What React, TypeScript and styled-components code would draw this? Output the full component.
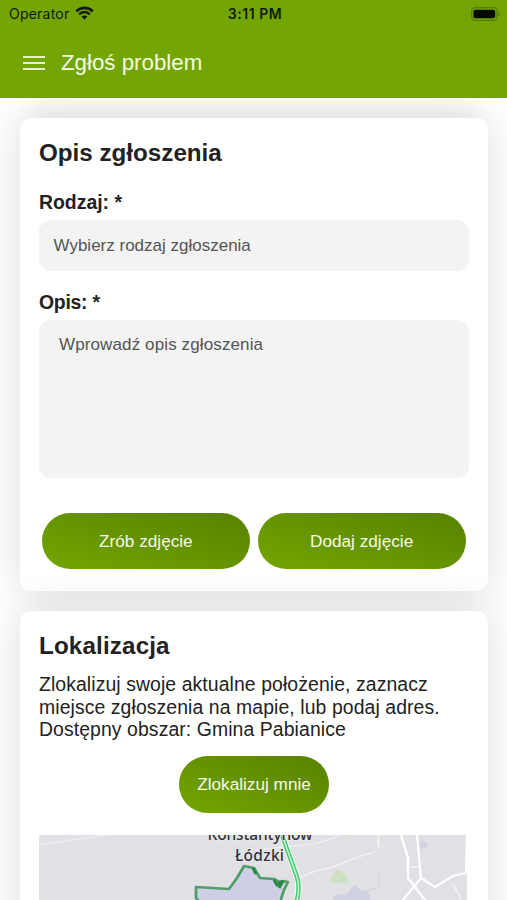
import React from "react";
import styled, { createGlobalStyle } from "styled-components";

const GlobalStyle = createGlobalStyle`
  * { box-sizing: border-box; }
  html, body { margin: 0; height: 100%; overflow: hidden; background: #fff; }
  body { font-family: "Liberation Sans", Arial, sans-serif; color: #222; }
  button, input, textarea { font-family: inherit; }
`;

const Screen = styled.div`
  height: 900px;
  overflow: hidden;
  display: flex;
  flex-direction: column;
`;

const Header = styled.header`
  height: 98px;
  flex: none;
  background: #73a504;
`;

const StatusBar = styled.div`
  height: 28px;
  padding: 0 6px 0 9px;
  display: grid;
  grid-template-columns: 1fr auto 1fr;
  align-items: center;
  font-family: Inter, sans-serif;
  font-size: 14px;
  line-height: 28px;
  color: #111c00;
`;

const Carrier = styled.div`
  display: flex;
  align-items: center;
  gap: 6px;
  letter-spacing: 0.22px;
  svg { margin-top: -2px; }
`;

const Clock = styled.div`
  font-weight: 600;
  letter-spacing: 0.55px;
`;

const Battery = styled.div`
  display: flex;
  justify-content: flex-end;
`;

const TitleBar = styled.div`
  height: 70px;
  padding-left: 23px;
  display: flex;
  align-items: center;
  gap: 16px;
`;

const Title = styled.h1`
  margin: 0;
  font-size: 22.3px;
  line-height: 28px;
  font-weight: 400;
  color: #f4fbe4;
`;

const MenuButton = styled.button`
  width: 22px;
  height: 14px;
  padding: 0;
  border: 0;
  background: none;
  display: flex;
  flex-direction: column;
  justify-content: space-between;
`;

const MenuLine = styled.span`
  height: 2px;
  width: 100%;
  background: #e6f3c6;
`;

const Content = styled.main`
  flex: 1;
  min-height: 0;
  overflow: hidden;
  padding: 20px 19px 0 20px;
  display: flex;
  flex-direction: column;
  gap: 20px;
`;

const Card = styled.section<{ $height: number; $lifted?: boolean }>`
  flex: none;
  height: ${(p) => p.$height}px;
  padding: 0 19px;
  border-radius: 11px;
  background: #fff;
  box-shadow: 0 0 40px rgba(0, 0, 0, 0.14)
    ${(p) => (p.$lifted ? ", 0 -24px 20px -10px rgba(0, 0, 0, 0.03)" : "")};
`;

const Heading = styled.h2<{ $top: number; $spacing?: number }>`
  margin: 0;
  padding-top: ${(p) => p.$top}px;
  font-size: 24.2px;
  line-height: 30px;
  font-weight: 700;
  letter-spacing: ${(p) => p.$spacing ?? 0}px;
`;

const Label = styled.label<{ $top: number; $spacing?: number }>`
  display: block;
  padding-top: ${(p) => p.$top}px;
  height: ${(p) => p.$top + 30}px;
  font-size: 19.4px;
  line-height: 24px;
  font-weight: 700;
  letter-spacing: ${(p) => p.$spacing ?? 0}px;
`;

const SelectField = styled.div`
  height: 51px;
  padding: 0 14.5px;
  border-radius: 12px;
  background: #f3f3f3;
  font-size: 17px;
  line-height: 52px;
  color: #555;
`;

const TextField = styled.div`
  height: 158px;
  padding: 15px 20px;
  border-radius: 12px;
  background: #f3f3f3;
  font-size: 17px;
  line-height: 20px;
  letter-spacing: 0.12px;
  color: #555;
`;

const ButtonRow = styled.div`
  display: flex;
  gap: 8px;
  padding: 35px 3.5px 0 3px;
`;

const PillButton = styled.button<{ $width?: number }>`
  ${(p) => (p.$width ? `width: ${p.$width}px;` : "flex: 1;")}
  height: ${(p) => (p.$width ? 57 : 56)}px;
  padding: 0;
  border: 0;
  border-radius: 29px;
  background: linear-gradient(to top right, #72a600, #588100);
  color: #f5faea;
  font-size: 17.2px;
  line-height: 57px;
`;

const Description = styled.p`
  margin: 12px 0 0;
  font-size: 19.4px;
  line-height: 22.6px;
  letter-spacing: 0.09px;
  white-space: nowrap;
`;

const CenterRow = styled.div`
  display: flex;
  justify-content: center;
  padding: 15px 0 22px;
`;

const MapView = styled.div`
  width: 428px;
  height: 180px;
  background: #e0e0e5;
  overflow: hidden;
  svg { display: block; }
`;

function WifiIcon() {
  return (
    <svg width="19" height="14" viewBox="0 0 19 14" fill="none" stroke="#111c00">
      <path d="M1.2 5.3C5.8.7 13.2.7 17.8 5.3" strokeWidth="2.6" />
      <path d="M4.1 8.3c3-3 7.8-3 10.8 0" strokeWidth="2.4" />
      <path d="M6.5 10.6c1.6-1.5 4.4-1.5 6 0l-3 3z" fill="#111c00" stroke="none" />
    </svg>
  );
}

function BatteryIcon() {
  return (
    <svg width="30" height="14" viewBox="0 0 30 14">
      <rect x="0.6" y="0.7" width="25.4" height="12.6" rx="3.6" fill="none" stroke="#547c02" strokeWidth="1.2" />
      <rect x="2.4" y="2.7" width="21.8" height="8.6" rx="2" fill="#050a00" />
      <path d="M27.4 4.9c2 .6 2 3.6 0 4.2z" fill="#547c02" />
    </svg>
  );
}

function AreaMap() {
  return (
    <svg width="428" height="180" viewBox="39 835 428 180">
      <path d="M39 845l32-5 36-5M255 850l60-6 24-8" fill="none" stroke="#ededf1" strokeWidth="1.5" />
      <path d="M297 880c12-8 21-10 34-12 16-7 26-12 44-16" fill="none" stroke="#f2f2f5" strokeWidth="1.6" />
      <path d="M379 835l-1 6 1 6" fill="none" stroke="#f3f3f6" strokeWidth="2" />
      <path d="M329 882l5-8 4-5 9 8 1 6-18-1z" fill="#ccdfbe" />
      <path d="M344 835h7l-4 2z" fill="#d5dfc4" />
      <path d="M332 900l3-5 12-1 7-9 7 5 7 1 2 9z" fill="#cfd0e1" />
      <path d="M366 891l13-4v-14" fill="none" stroke="#d5d6e2" strokeWidth="1.5" />
      <circle cx="423" cy="845" r="4" fill="#d3d4e3" />
      <path d="M401 835l7 23v20l17 22v18M417 835l4 43-18 22-4 5M421 878l14 9 18-11 13-3 1-38" fill="none" stroke="#fff" strokeWidth="2.3" strokeLinejoin="round" />
      <path d="M408 867h12M453 884l7 12v8" fill="none" stroke="#f4f4f7" strokeWidth="1.5" />
      <path d="M282 835l15 42q4 13-2 29" fill="none" stroke="#f4fff6" strokeWidth="6.5" />
      <path d="M282 835l15 42q4 13-2 29" fill="none" stroke="#48c774" strokeWidth="4.5" />
      <path d="M282 835l15 42q4 13-2 29" fill="none" stroke="#c9f3d5" strokeWidth="1.5" />
      <path d="M202 905l-6-7v-11l33 2 8-11 7-12 10 2 6 10 14 1 5 3 4-1 5 1-4 8-3 9v5z" fill="#cecee7" stroke="#519d68" strokeWidth="2.7" strokeLinejoin="round" />
      <path d="M253 868l3 6M274 880l3 5 6-4-4 7" fill="none" stroke="#2b8844" strokeWidth="3" />
      <g fontFamily="Noto Sans, sans-serif" fontWeight="500" fontSize="15.5" fill="#303035" stroke="#eeeef2" strokeWidth="1.2" paintOrder="stroke" textAnchor="middle">
        <text x="260" y="839.5" textLength="105">Konstantynów</text>
        <text x="259.5" y="860.5" textLength="49">Łódzki</text>
      </g>
    </svg>
  );
}

export default function App() {
  return (
    <>
      <GlobalStyle />
      <Screen>
        <Header>
          <StatusBar>
            <Carrier>Operator<WifiIcon /></Carrier>
            <Clock>3:11 PM</Clock>
            <Battery><BatteryIcon /></Battery>
          </StatusBar>
          <TitleBar>
            <MenuButton aria-label="Menu"><MenuLine /><MenuLine /><MenuLine /></MenuButton>
            <Title>Zgłoś problem</Title>
          </TitleBar>
        </Header>
        <Content>
          <Card $height={473} $lifted>
            <Heading $top={20}>Opis zgłoszenia</Heading>
            <Label $top={22}>Rodzaj: *</Label>
            <SelectField>Wybierz rodzaj zgłoszenia</SelectField>
            <Label $top={19} $spacing={-0.25}>Opis: *</Label>
            <TextField>Wprowadź opis zgłoszenia</TextField>
            <ButtonRow>
              <PillButton>Zrób zdjęcie</PillButton>
              <PillButton>Dodaj zdjęcie</PillButton>
            </ButtonRow>
          </Card>
          <Card $height={440}>
            <Heading $top={20} $spacing={0.15}>Lokalizacja</Heading>
            <Description>
              Zlokalizuj swoje aktualne położenie, zaznacz<br />
              miejsce zgłoszenia na mapie, lub podaj adres.<br />
              Dostępny obszar: Gmina Pabianice
            </Description>
            <CenterRow>
              <PillButton $width={150}>Zlokalizuj mnie</PillButton>
            </CenterRow>
            <MapView><AreaMap /></MapView>
          </Card>
        </Content>
      </Screen>
    </>
  );
}
